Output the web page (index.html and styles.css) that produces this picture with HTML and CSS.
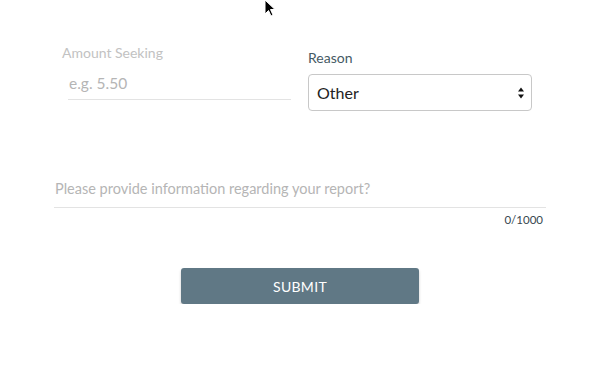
FILE: index.html
```html
<!DOCTYPE html>
<html lang="en">
<head>
  <meta charset="UTF-8">
  <meta name="viewport" content="width=device-width, initial-scale=1.0">
  <title>Report Form</title>
  <link rel="stylesheet" href="styles.css">
</head>
<body>
  <form class="report-form" id="reportForm">
    <div class="row">
      <div class="field amount">
        <label class="float-label" for="amount">Amount Seeking</label>
        <input class="line-input" type="text" id="amount" name="amount" placeholder="e.g. 5.50">
      </div>
      <div class="field reason">
        <label class="label" for="reason">Reason</label>
        <div class="select-wrap">
          <select class="select" id="reason" name="reason">
            <option value="late">Late Delivery</option>
            <option value="missing">Missing Item</option>
            <option value="other" selected>Other</option>
          </select>
          <svg class="select-arrows" width="8" height="14" viewBox="0 0 8 14">
            <path d="M4 1.5 L7 5.5 L1 5.5 Z" fill="#111"/>
            <path d="M4 12.5 L7 8.5 L1 8.5 Z" fill="#111"/>
          </svg>
        </div>
      </div>
    </div>

    <div class="field details">
      <textarea class="line-area" id="details" name="details" rows="1" maxlength="1000" placeholder="Please provide information regarding your report?"></textarea>
      <div class="counter">0/1000</div>
    </div>

    <div class="actions">
      <button class="submit" type="button">SUBMIT</button>
    </div>
  </form>

  <!-- mouse pointer from the capture -->
  <svg class="cursor" width="14" height="20" viewBox="0 0 14 20">
    <path d="M1 1 L1 15 L4.5 11.5 L7 17 L9 16 L6.5 10.5 L11 10.5 Z" fill="#000" stroke="#fff" stroke-width="1"/>
  </svg>
</body>
</html>
```

FILE: styles.css
```css
body {
  margin: 0;
  font-family: Lato, "Open Sans", sans-serif;
  background: #fff;
}
.report-form {
  width: 492px;
  margin-left: 54px;
  padding-top: 44px;
}
.row {
  display: flex;
  gap: 17px;
  margin-left: 8px;
}
.field {
  display: flex;
  flex-direction: column;
}
.amount {
  width: 229px;
  padding-top: 1px;
}
.reason {
  width: 224px;
}
.float-label {
  font-size: 14px;
  line-height: 16px;
  color: #c2c2c2;
}
.line-input {
  margin: 13px 0 0 6px;
  padding: 0 0 7px 1px;
  border: none;
  border-bottom: 1px solid #e3e3e3;
  font-family: inherit;
  font-size: 15.5px;
  line-height: 18px;
  color: #333;
  outline: none;
}
.line-input::placeholder,
.line-area::placeholder {
  color: #b5b5b5;
}
.label {
  margin-top: 6px;
  font-size: 14px;
  line-height: 16px;
  color: #455a64;
}
.select-wrap {
  position: relative;
  margin-top: 8px;
}
.select {
  appearance: none;
  -webkit-appearance: none;
  width: 100%;
  height: 37px;
  padding: 0 24px 0 8px;
  border: 1px solid #c8c8c8;
  border-radius: 4px;
  background: #fff;
  font-family: inherit;
  font-size: 16px;
  color: #222;
}
.select-arrows {
  position: absolute;
  right: 7px;
  top: 12px;
  pointer-events: none;
}
.details {
  margin-top: 69px;
}
.line-area {
  resize: none;
  padding: 0 0 9px 1px;
  border: none;
  border-bottom: 1px solid #e3e3e3;
  font-family: inherit;
  font-size: 14.5px;
  line-height: 18px;
  color: #333;
  outline: none;
  overflow: hidden;
}
.counter {
  margin-top: 5px;
  padding-right: 3px;
  text-align: right;
  font-size: 11.5px;
  color: #37474f;
}
.actions {
  display: flex;
  justify-content: center;
  margin-top: 42px;
  margin-left: -8px;
  margin-right: -8px;
  width: 508px;
}
.submit {
  width: 238px;
  height: 36px;
  border: none;
  border-radius: 3px;
  background-color: #607885;
  color: #fff;
  font-family: inherit;
  font-size: 14px;
  letter-spacing: 0.3px;
  box-shadow: 0 2px 3px rgba(0, 0, 0, 0.2);
  cursor: pointer;
}
.cursor {
  position: absolute;
  left: 264px;
  top: -1px;
}
```
